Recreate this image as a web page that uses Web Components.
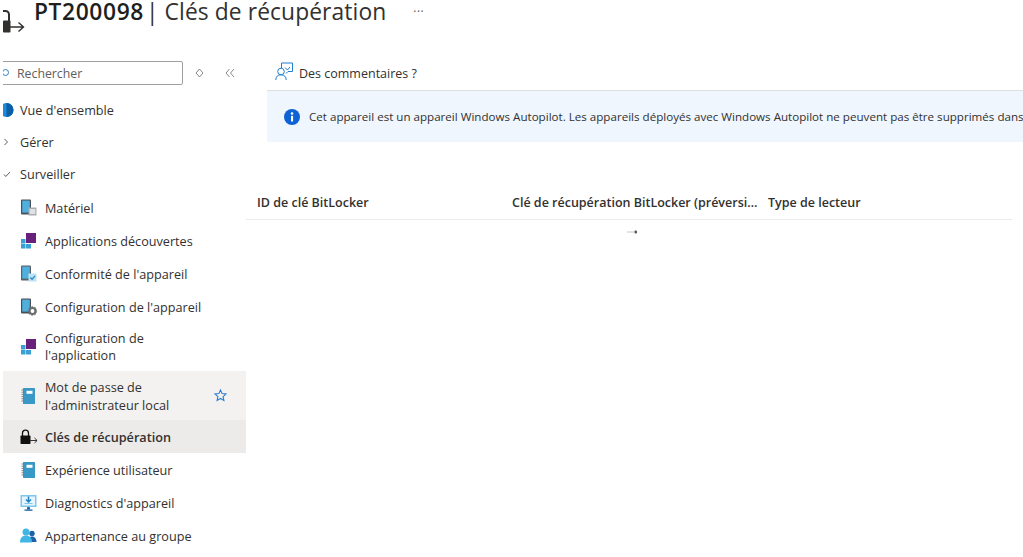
<!DOCTYPE html>
<html lang="fr">
<head>
<meta charset="utf-8">
<title>PT200098 | Clés de récupération</title>
<style>
  html, body { margin: 0; height: 100%; overflow: hidden; background: #fff; }
  body { font-family: "Open Sans", "Noto Sans", sans-serif; color: #323130; }
</style>
</head>
<body>
<blade-page>
  <blade-header slot="header" resource="PT200098" title-text="Clés de récupération"></blade-header>
  <side-nav slot="nav">
    <nav-item icon="overview">Vue d'ensemble</nav-item>
    <nav-item icon="chevron">Gérer</nav-item>
    <nav-item icon="check">Surveiller</nav-item>
    <nav-item child first icon="hardware">Matériel</nav-item>
    <nav-item child icon="apps">Applications découvertes</nav-item>
    <nav-item child icon="compliance">Conformité de l'appareil</nav-item>
    <nav-item child icon="config">Configuration de l'appareil</nav-item>
    <nav-item child tall icon="apps">Configuration de<br>l'application</nav-item>
    <nav-item child tall hover star icon="book">Mot de passe de<br>l'administrateur local</nav-item>
    <nav-item child active icon="lock">Clés de récupération</nav-item>
    <nav-item child icon="book">Expérience utilisateur</nav-item>
    <nav-item child icon="diagnostics">Diagnostics d'appareil</nav-item>
    <nav-item child icon="group">Appartenance au groupe</nav-item>
  </side-nav>
  <feedback-bar slot="main">Des commentaires ?</feedback-bar>
  <info-banner slot="main">Cet appareil est un appareil Windows Autopilot. Les appareils déployés avec Windows Autopilot ne peuvent pas être supprimés dans Intune.</info-banner>
  <key-grid slot="main"></key-grid>
</blade-page>

<script>
const ICONS = {
  overview: `<svg width="16" height="16" viewBox="0 0 16 16"><circle cx="3.500" cy="8" r="7" fill="#1f8ad6"/><path d="M3.500 1a7 7 0 0 1 0 14z" fill="#0b5fa8"/></svg>`,
  chevron: `<svg width="16" height="16" viewBox="0 0 16 16"><path d="M1.500 5l3 3-3 3" fill="none" stroke="#605e5c" stroke-width="1"/></svg>`,
  check: `<svg width="16" height="16" viewBox="0 0 16 16"><path d="M1 8.500l1.800 2L7 6" fill="none" stroke="#605e5c" stroke-width="1"/></svg>`,
  hardware: `<svg width="18" height="18" viewBox="0 0 18 18"><rect x="2" y="0.500" width="10" height="15" rx="1" fill="#4a5056"/><rect x="3.200" y="1.600" width="7.600" height="12" fill="#4fb0de"/><rect x="9.500" y="8.500" width="8" height="8" fill="#a9adb0"/><rect x="10.700" y="10" width="5.600" height="5" fill="#dfe1e2"/></svg>`,
  apps: `<svg width="18" height="18" viewBox="0 0 18 18"><rect x="7" y="1" width="10" height="10" fill="#68217a"/><rect x="2" y="7" width="4.500" height="4.500" fill="#3a9fd3"/><rect x="2" y="12" width="4.500" height="4.500" fill="#3a9fd3"/><rect x="7" y="12" width="5" height="4.500" fill="#3a9fd3"/></svg>`,
  compliance: `<svg width="18" height="18" viewBox="0 0 18 18"><rect x="2" y="0.500" width="10" height="15" rx="1" fill="#5b6066"/><rect x="3.200" y="1.600" width="7.600" height="12" fill="#4fb0de"/><rect x="9.500" y="8.500" width="8" height="8" fill="#bfe2f4"/><path d="M11.300 12.500l1.800 1.800 3-3.400" fill="none" stroke="#2b88c8" stroke-width="1.300"/></svg>`,
  config: `<svg width="18" height="18" viewBox="0 0 18 18"><rect x="2" y="0.500" width="10" height="15" rx="1" fill="#4a5056"/><rect x="3.200" y="1.600" width="7.600" height="12" fill="#4fb0de"/><circle cx="13.500" cy="13" r="3" fill="#fff" stroke="#6b6e71" stroke-width="2.200"/><circle cx="13.500" cy="13" r="4.400" fill="none" stroke="#6b6e71" stroke-width="1" stroke-dasharray="1.600 1.600"/></svg>`,
  book: `<svg width="18" height="18" viewBox="0 0 18 18"><rect x="4" y="1" width="12" height="16" rx="0.500" fill="#3999c6"/><path d="M2.500 3h2M2.500 5.200h2M2.500 7.400h2M2.500 9.600h2M2.500 11.800h2M2.500 14h2" stroke="#6f7478" stroke-width="0.900"/><rect x="7.500" y="3.800" width="6" height="3" fill="#fff"/></svg>`,
  lock: `<svg width="20" height="18" viewBox="0 0 20 18"><path d="M3.500 8V5.200a3 3 0 0 1 6 0V8" fill="none" stroke="#111" stroke-width="1.300"/><rect x="1.500" y="7.500" width="10" height="8.500" rx="0.800" fill="#111"/><path d="M11 12.500h7M15.500 10l2.600 2.500-2.600 2.500" fill="none" stroke="#333" stroke-width="1"/></svg>`,
  diagnostics: `<svg width="18" height="18" viewBox="0 0 18 18"><rect x="1.500" y="1" width="16" height="12" rx="0.500" fill="#7cc7ea"/><rect x="3" y="2.500" width="13" height="9" fill="#e6f5fc"/><path d="M9.500 2.500v5M7 5.500L9.500 8 12 5.500" fill="none" stroke="#1f7fc0" stroke-width="1.500"/><path d="M5.500 9.500h8" stroke="#7cc7ea" stroke-width="1"/><path d="M8.300 13h2.400l.6 2.500H7.700z" fill="#1b62a8"/><rect x="5.500" y="15.500" width="8" height="1.300" fill="#1b62a8"/></svg>`,
  group: `<svg width="18" height="18" viewBox="0 0 18 18"><circle cx="13" cy="6.500" r="2.700" fill="#1b62a8"/><path d="M9 15c0-3.500 1.600-5.500 4-5.500s4.500 2 4.500 5.500z" fill="#1b62a8"/><circle cx="7" cy="5" r="3.500" fill="#41b6e6"/><path d="M1 15.500c0-4.500 2.400-7 6-7s6 2.500 6 7z" fill="#41b6e6"/></svg>`,
};

class BladePage extends HTMLElement {
  constructor() {
    super();
    this.attachShadow({ mode: 'open' }).innerHTML = `
      <style>
        :host { display: grid; grid-template-rows: 61px 1fr; height: 557px; overflow: hidden; }
        .body { display: grid; grid-template-columns: 243px 1fr; padding-left: 3px; min-height: 0; }
        .main { display: flex; flex-direction: column; min-width: 0; overflow: hidden; }
      </style>
      <slot name="header"></slot>
      <div class="body">
        <slot name="nav"></slot>
        <div class="main"><slot name="main"></slot></div>
      </div>`;
  }
}

class BladeHeader extends HTMLElement {
  constructor() {
    super();
    this.attachShadow({ mode: 'open' });
  }
  connectedCallback() {
    const res = this.getAttribute('resource') || '';
    const title = this.getAttribute('title-text') || '';
    this.shadowRoot.innerHTML = `
      <style>
        :host { display: flex; align-items: flex-start; color: #323130; }
        svg { margin: 9px 0 0 3px; flex: none; }
        h1 { margin: 0 0 0 9px; font-size: 22.800px; line-height: 24px; font-weight: 400; white-space: nowrap; letter-spacing: 0.1px; }
        b { font-weight: 600; color: #201f1e; letter-spacing: 0.6px; margin-right: -4px; }
        .more { margin: 2px 0 0 27px; font-size: 12px; line-height: 20px; color: #605e5c; letter-spacing: 0.5px; }
      </style>
      <svg width="22" height="25" viewBox="0 0 22 25">
        <path d="M0 2h2.500a3.500 3.500 0 0 1 3.500 3.500V12" fill="none" stroke="#323130" stroke-width="2"/>
        <rect x="0" y="11.500" width="7.500" height="12" rx="0.800" fill="#323130"/>
        <path d="M7 18h13.500M15.500 13.500l5 4.500-5 4.500" fill="none" stroke="#323130" stroke-width="1.400"/>
      </svg>
      <h1><b>${res}</b> | ${title}</h1>
      <span class="more">···</span>`;
  }
}

class SideNav extends HTMLElement {
  constructor() {
    super();
    this.attachShadow({ mode: 'open' }).innerHTML = `
      <style>
        :host { display: block; overflow: hidden; font-size: 12.300px; }
        .tools { display: flex; align-items: center; height: 24px; margin-bottom: 9px; }
        .search { width: 185px; height: 24px; margin-left: -5px; box-sizing: border-box; flex: none;
          border: 1px solid #a19f9d; border-radius: 2px; display: flex; align-items: center; color: #605e5c; }
        .search svg { margin: 0 6px 0 3px; flex: none; }
        .sort { margin-left: 12px; flex: none; }
        .collapse { margin-left: 21px; flex: none; }
      </style>
      <div class="tools">
        <div class="search">
          <svg width="9" height="10" viewBox="0 0 9 10"><circle cx="3.500" cy="4.500" r="3" fill="none" stroke="#2f7fc1" stroke-width="1"/></svg>
          Rechercher
        </div>
        <svg class="sort" width="9" height="10" viewBox="0 0 9 10"><path d="M4.500 1L8 5 4.500 9 1 5z" fill="none" stroke="#8a8886"/></svg>
        <svg class="collapse" width="10" height="10" viewBox="0 0 10 10"><path d="M4.500 1L1 5l3.500 4M9 1L5.500 5 9 9" fill="none" stroke="#8a8886"/></svg>
      </div>
      <slot></slot>`;
  }
}

class NavItem extends HTMLElement {
  constructor() {
    super();
    this.attachShadow({ mode: 'open' });
  }
  connectedCallback() {
    const child = this.hasAttribute('child');
    const star = this.hasAttribute('star')
      ? `<svg class="star" width="13" height="13" viewBox="0 0 13 13"><path d="M6.500 1l1.600 3.600 3.900.4-2.900 2.600.8 3.900-3.400-2-3.400 2 .8-3.900L1 5l3.900-.4z" fill="none" stroke="#2b7cd3" stroke-width="1.100"/></svg>`
      : '';
    this.shadowRoot.innerHTML = `
      <style>
        :host { display: flex; align-items: center; height: ${child ? 33 : 32}px; box-sizing: border-box;
          font-size: 12.650px; line-height: 17.500px; color: #323130; }
        :host([first]) { margin-top: 1.500px; }
        :host([tall]) { height: 47.500px; }
        :host([hover]) { background: #f3f2f1; height: 49px; }
        :host([active]) { background: #edebe9; font-weight: 600; }
        .icon { display: flex; flex: none; align-items: center; justify-content: flex-start; }
        :host([child]) .icon { width: 23px; margin-left: 16px; margin-right: 3px; }
        :host(:not([child])) .icon { width: 17px; }
        .label { flex: 1; min-width: 0; padding-top: 2px; }
        :host([tall]:not([hover])) .label { padding-top: 0; }
        .star { margin-right: 19px; flex: none; }
      </style>
      <span class="icon">${ICONS[this.getAttribute('icon')] || ''}</span>
      <span class="label"><slot></slot></span>
      ${star}`;
  }
}

class FeedbackBar extends HTMLElement {
  constructor() {
    super();
    this.attachShadow({ mode: 'open' }).innerHTML = `
      <style>
        :host { display: flex; align-items: center; height: 30px; box-sizing: border-box; margin-left: 21px;
          padding: 0 0 5px 8px; gap: 6px; font-size: 12.500px; border-bottom: 1px solid #e1dfdd; color: #323130; }
        svg { flex: none; margin-top: -4px; }
      </style>
      <svg width="18" height="19" viewBox="0 0 18 19">
        <path d="M6.500 6V1h11v8.500H13l-2 2" fill="none" stroke="#1f7fd1" stroke-width="1"/>
        <path d="M10 5.500l2.500 2.500 2.500-3" fill="none" stroke="#1f7fd1" stroke-width="1"/>
        <circle cx="6" cy="9.500" r="3.300" fill="none" stroke="#1f7fd1" stroke-width="1"/>
        <path d="M.8 18c0-3.500 2-5.200 5.200-5.200s5.200 1.700 5.200 5.200" fill="none" stroke="#1f7fd1" stroke-width="1"/>
      </svg>
      <slot></slot>`;
  }
}

class InfoBanner extends HTMLElement {
  constructor() {
    super();
    this.attachShadow({ mode: 'open' }).innerHTML = `
      <style>
        :host { display: flex; align-items: center; height: 51px; box-sizing: border-box; margin-left: 21px;
          padding: 0 0 0 17px; gap: 9px; background: #eff6fe; font-size: 11.600px; white-space: nowrap;
          overflow: hidden; color: #323130; }
        svg { flex: none; }
      </style>
      <svg width="16" height="16" viewBox="0 0 16 16">
        <circle cx="8" cy="8" r="8" fill="#0f62d6"/>
        <rect x="7" y="6.800" width="2.100" height="5.700" fill="#fff"/>
        <circle cx="8" cy="4.500" r="1.250" fill="#fff"/>
      </svg>
      <span><slot></slot></span>`;
  }
}

class KeyGrid extends HTMLElement {
  constructor() {
    super();
    this.attachShadow({ mode: 'open' }).innerHTML = `
      <style>
        :host { display: block; margin-top: 44px; width: 766px; font-size: 12.500px; color: #323130; }
        .head { display: grid; grid-template-columns: 255px 256px 1fr; height: 34px; align-items: center;
          box-sizing: border-box; border-bottom: 1px solid #edebe9; padding: 0 0 0 11px; font-weight: 600; }
        .head span { white-space: nowrap; overflow: hidden; text-overflow: ellipsis; padding-right: 10px; }
        .loader { display: flex; justify-content: center; padding: 10px 0 0 0; margin-left: 5px; }
      </style>
      <div class="head">
        <span>ID de clé BitLocker</span>
        <span>Clé de récupération BitLocker (préversion)</span>
        <span>Type de lecteur</span>
      </div>
      <div class="loader">
        <svg width="12" height="4" viewBox="0 0 12 4"><path d="M1 2h7" stroke="#c8c6c4"/><rect x="8.500" y="0.500" width="2.500" height="3" rx="1" fill="#555"/></svg>
      </div>`;
  }
}

customElements.define('blade-page', BladePage);
customElements.define('blade-header', BladeHeader);
customElements.define('side-nav', SideNav);
customElements.define('nav-item', NavItem);
customElements.define('feedback-bar', FeedbackBar);
customElements.define('info-banner', InfoBanner);
customElements.define('key-grid', KeyGrid);
</script>
</body>
</html>
